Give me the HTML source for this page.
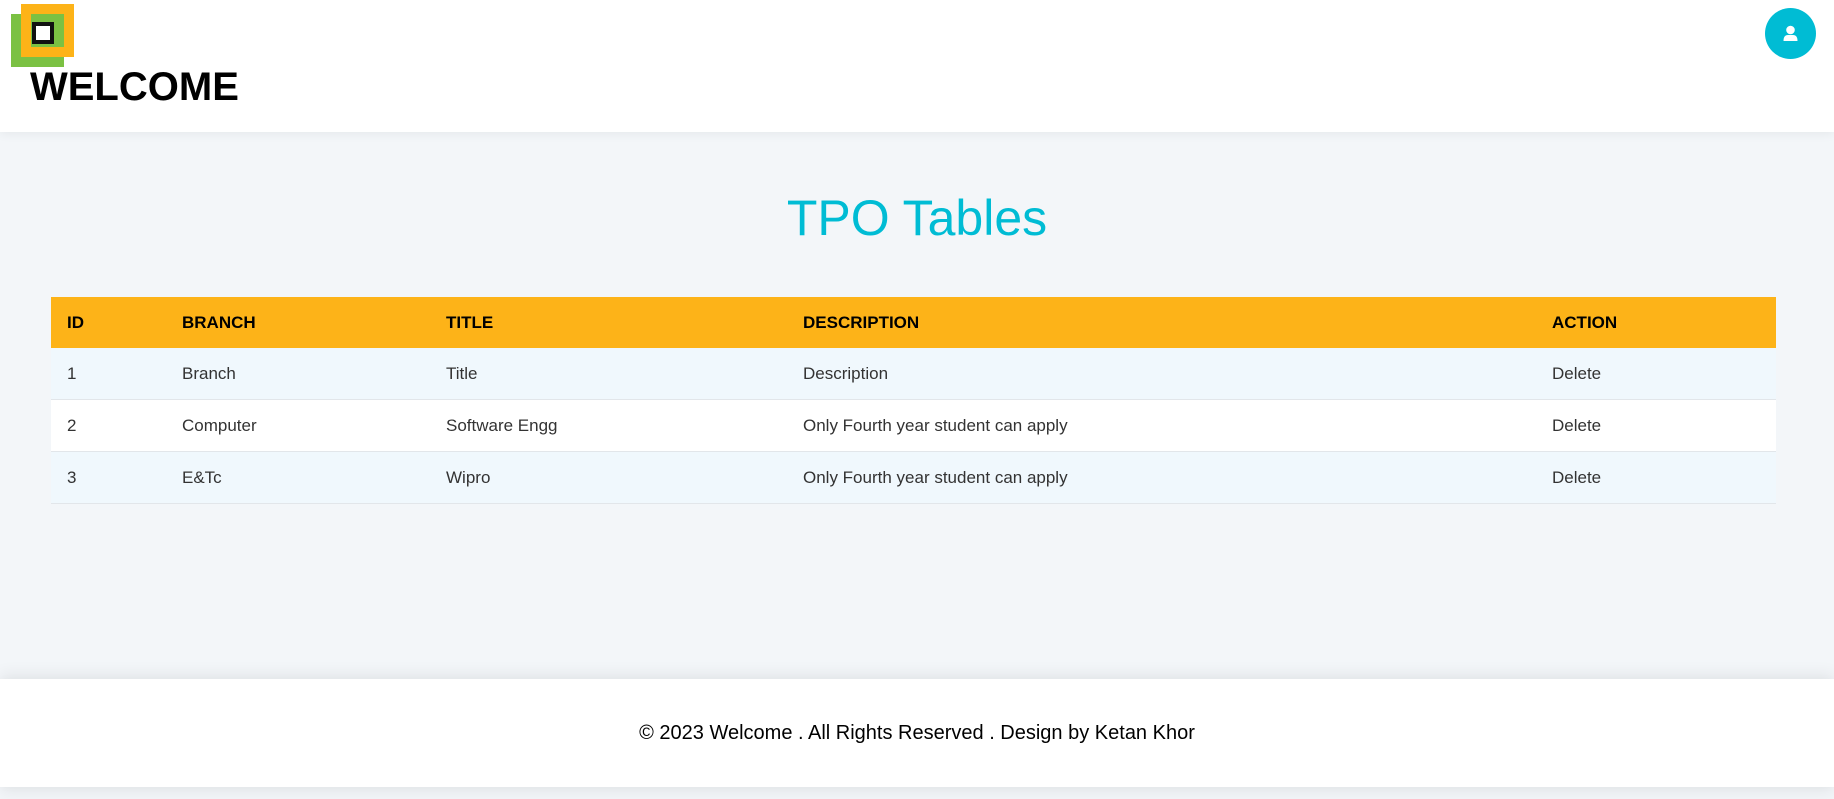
<!DOCTYPE html>
<html><head><meta charset="utf-8"><style>
html,body{margin:0;padding:0}
body{width:1834px;height:799px;background:#f3f6f9;font-family:"Liberation Sans",Arial,sans-serif;position:relative;overflow:hidden}
.hdr{position:absolute;left:0;top:0;width:1834px;height:132px;background:#fff;box-shadow:0 2px 10px rgba(0,0,0,.06)}
.g{position:absolute;left:11px;top:14px;width:53px;height:53px;background:#7bc143}
.o{position:absolute;left:21px;top:4px;width:53px;height:53px;background:#fdb318}
.ig{position:absolute;left:31px;top:14px;width:33px;height:33px;background:#7bc143}
.b{position:absolute;left:32px;top:22px;width:14px;height:14px;border:4px solid #111;background:#fff}
.w{position:absolute;left:30px;top:65px;font-weight:bold;font-size:40px;color:#000}
.av{position:absolute;left:1765px;top:8px;width:51px;height:51px;border-radius:50%;background:#00bcd4}
h1{position:absolute;left:0;width:1834px;top:188px;margin:0;text-align:center;font-weight:normal;font-size:50px;color:#00bcd4;line-height:60px}
table{position:absolute;left:51px;top:297px;width:1725px;border-collapse:collapse;font-size:17px}
th{background:#fdb318;height:51px;text-align:left;font-size:17px;font-weight:bold;color:#000;padding:0}
td{height:51px;padding:0;color:#333;border-bottom:1px solid #e2e6ea}
tr.a td{background:#f0f8fd}
tr.bb td{background:#fff}
.c1{padding-left:16px;width:115px}
.ft{position:absolute;left:0;top:679px;width:1834px;height:108px;background:#fff;box-shadow:0 -6px 14px rgba(0,0,0,.06),0 6px 14px rgba(0,0,0,.06);text-align:center;line-height:108px;font-size:20px;color:#000}
</style></head><body>
<div class="hdr">
<div class="g"></div><div class="o"></div><div class="ig"></div><div class="b"></div>
<div class="w">WELCOME</div>
<div class="av"><svg width="51" height="51" viewBox="0 0 51 51"><circle cx="25.5" cy="22" r="4.3" fill="#fff"/><path d="M18.5 33 Q18.5 27 23 27 L28 27 Q32.5 27 32.5 33 Z" fill="#fff"/></svg></div>
</div>
<h1>TPO Tables</h1>
<table>
<tr><th class="c1">ID</th><th style="width:264px">BRANCH</th><th style="width:357px">TITLE</th><th style="width:749px">DESCRIPTION</th><th>ACTION</th></tr>
<tr class="a"><td class="c1">1</td><td>Branch</td><td>Title</td><td>Description</td><td>Delete</td></tr>
<tr class="bb"><td class="c1">2</td><td>Computer</td><td>Software Engg</td><td>Only Fourth year student can apply</td><td>Delete</td></tr>
<tr class="a"><td class="c1">3</td><td>E&amp;Tc</td><td>Wipro</td><td>Only Fourth year student can apply</td><td>Delete</td></tr>
</table>
<div class="ft">© 2023 Welcome . All Rights Reserved . Design by Ketan Khor</div>
</body></html>
